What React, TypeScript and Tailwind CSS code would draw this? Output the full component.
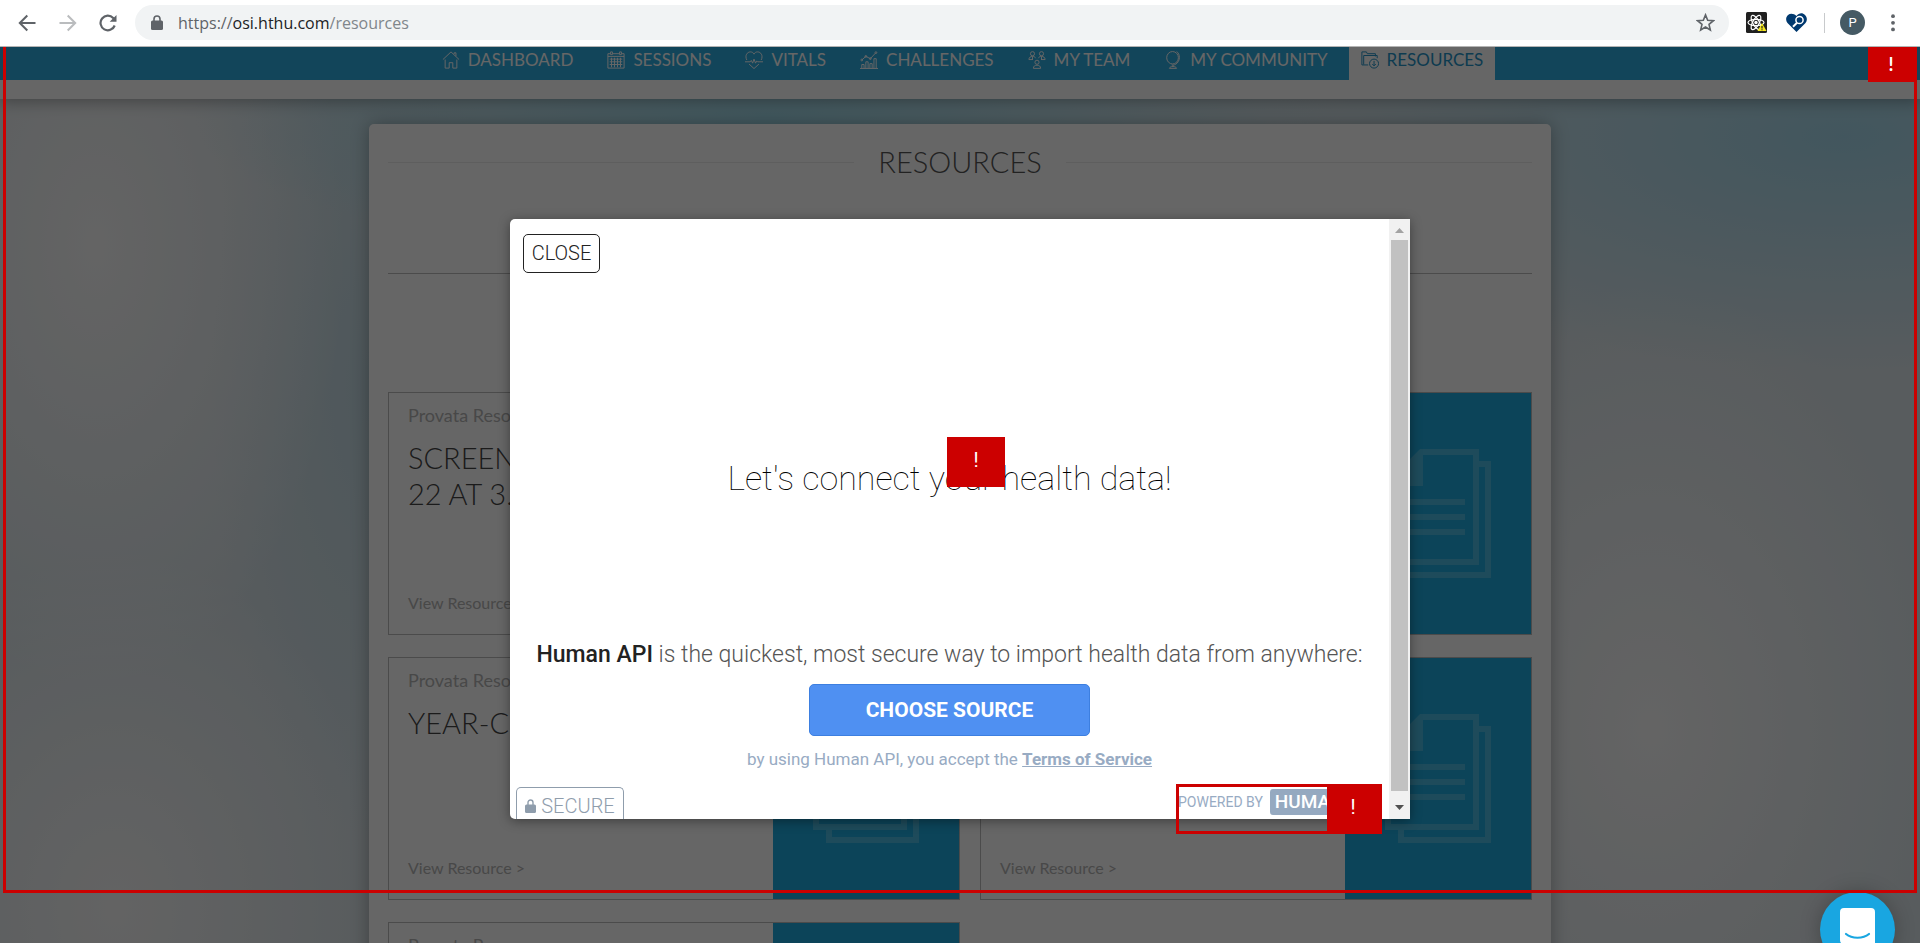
import React from "react";

type IconProps = { className?: string };

const stroke = {
  viewBox: "0 0 20 20",
  fill: "none",
  stroke: "currentColor",
  strokeWidth: 1.1,
  "aria-hidden": true,
} as const;

const HomeIcon = ({ className }: IconProps) => (
  <svg {...stroke} className={className}>
    <path d="M1 9.500 10 1l9 8.500M3.500 9.500V19H8v-6h4v6h4.500V9.500M13.500 3.500V2h2v3.800" />
  </svg>
);
const CalendarIcon = ({ className }: IconProps) => (
  <svg {...stroke} className={className}>
    <path d="M1 3h3m2 0h8m2 0h3v16H1V3M1 6h18M4 1h2v3H4zM14 1h2v3h-2zM3 9h14M3 12h14M3 15h14M5 7.500V18M8.300 7.500V18M11.700 7.500V18M15 7.500V18" />
  </svg>
);
const VitalsIcon = ({ className }: IconProps) => (
  <svg {...stroke} className={className}>
    <path d="M2 10C-.5 5 2.500 1 6 1c1.800 0 3.200.8 4 2.500C10.800 1.800 12.200 1 14 1c3.500 0 6.500 4 4 9M0 12h6l1-1.500 1.500 3L10 9l1.700 4.500 1.300-2.500 1 1h6M4.500 14.500 10 19.500l5.500-5" />
  </svg>
);
const ChartIcon = ({ className }: IconProps) => (
  <svg {...stroke} className={className}>
    <path d="M0 19.400h20M2 19v-4h2.500v4M6.500 19v-7H9v7M11 19v-5h2.500v5M15.500 19V8.500H18V19M2 10l4.500-4 5 2.500L17.500 2" />
    <circle cx="2" cy="10" r="1" />
    <circle cx="6.500" cy="6" r="1" />
    <circle cx="11.500" cy="8.500" r="1" />
    <circle cx="17.700" cy="1.800" r="1" />
  </svg>
);
const TeamIcon = ({ className }: IconProps) => (
  <svg {...stroke} className={className}>
    <circle cx="5" cy="3" r="2.300" />
    <circle cx="15" cy="3" r="2.300" />
    <circle cx="10" cy="12.500" r="2.300" />
    <path d="M1 9.500C1 7 3 6 5 6s3 .8 3.500 2M19 9.500C19 7 17 6 15 6s-3 .8-3.500 2M1 9.500h4M19 9.500h-4M6 19.300c0-2.600 1.800-3.500 4-3.500s4 .9 4 3.500zM5 6v4M15 6v4" />
  </svg>
);
const GlobeIcon = ({ className }: IconProps) => (
  <svg {...stroke} className={className}>
    <ellipse cx="9.500" cy="7.500" rx="6.500" ry="6.900" />
    <path d="M14 .7c4 2 4.800 11-1.500 14.300-1.200.7-3 .7-4 .4M10 15.500v2M6 19.300c.5-1.600 2-2 4-2s3.500.4 4 2z" />
  </svg>
);
const FolderIcon = ({ className }: IconProps) => (
  <svg {...stroke} className={className}>
    <path d="M8 15.500H1V1h5l1 2h9v3M3 15V5h15v3" />
    <circle cx="14.500" cy="14" r="5" />
    <path d="M14.500 11v5.500m-2-2 2 2 2-2" />
  </svg>
);

const navItems = [
  { label: "DASHBOARD", Icon: HomeIcon },
  { label: "SESSIONS", Icon: CalendarIcon },
  { label: "VITALS", Icon: VitalsIcon },
  { label: "CHALLENGES", Icon: ChartIcon },
  { label: "MY TEAM", Icon: TeamIcon },
  { label: "MY COMMUNITY", Icon: GlobeIcon },
];

function BrowserBar() {
  return (
    <header className="flex h-[47px] shrink-0 items-center border-b border-[#b4b4b4] bg-white pb-px pl-[18px] pr-[18px] font-['Open_Sans',sans-serif] text-[#5f6368]">
      <button aria-label="Back">
        <svg className="size-[18px]" viewBox="0 0 18 18" fill="none" stroke="currentColor" strokeWidth="2" aria-hidden>
          <path d="M17.500 9H2M9.300 1.500 1.800 9l7.500 7.500" />
        </svg>
      </button>
      <button aria-label="Forward" className="ml-[23px] text-[#babcbe]">
        <svg className="size-[18px]" viewBox="0 0 18 18" fill="none" stroke="currentColor" strokeWidth="2" aria-hidden>
          <path d="M.5 9H16M8.700 1.500 16.200 9l-7.500 7.500" />
        </svg>
      </button>
      <button aria-label="Reload" className="ml-[22px]">
        <svg className="size-[18px]" viewBox="0 0 18 18" fill="none" stroke="currentColor" strokeWidth="2.200" aria-hidden>
          <path d="M15.700 11.500A7.300 7.300 0 1 1 14.200 4L16 6" />
          <path d="M17.500 1v6.800h-6.800z" fill="currentColor" stroke="none" />
        </svg>
      </button>
      <div className="ml-[18px] flex h-[35px] flex-1 items-center rounded-full bg-[#f1f3f4] pl-4 pr-[14px]">
        <svg className="h-[15px] w-[12px]" viewBox="0 0 12 15" aria-hidden>
          <path d="M3 6V4a3 3 0 0 1 6 0v2" fill="none" stroke="currentColor" strokeWidth="1.600" />
          <rect y="5.500" width="12" height="9.500" rx="1.500" fill="currentColor" />
        </svg>
        <p className="ml-[15px] flex-1 text-[16px] text-[#80868b]">
          <span className="text-[#5f6368]">https://</span>
          <span className="text-[#202124]">osi.hthu.com</span>/resources
        </p>
        <button aria-label="Bookmark this page">
          <svg className="size-[19px]" viewBox="0 0 20 20" fill="none" stroke="currentColor" strokeWidth="1.700" aria-hidden>
            <path d="m10 2 2.300 5.600 6 .5-4.600 3.900 1.400 5.900L10 14.800l-5.100 3.100L6.300 12 1.700 8.100l6-.5z" />
          </svg>
        </button>
      </div>
      <button aria-label="React developer tools" className="ml-[17px]">
        <svg className="size-[21px]" viewBox="0 0 21 21" aria-hidden>
          <rect width="21" height="21" rx="1.500" fill="#202020" />
          <g fill="none" stroke="#fff" strokeWidth="1.200">
            <ellipse cx="10" cy="10.500" rx="8" ry="3.200" />
            <ellipse cx="10" cy="10.500" rx="8" ry="3.200" transform="rotate(60 10 10.500)" />
            <ellipse cx="10" cy="10.500" rx="8" ry="3.200" transform="rotate(120 10 10.500)" />
          </g>
          <circle cx="10" cy="10.500" r="1.700" fill="#fff" />
          <path d="m16 11 4.500 8h-9z" fill="#f4e61e" />
          <path d="M16 14v2.500m0 .8v1" stroke="#202020" strokeWidth="1.200" />
        </svg>
      </button>
      <button aria-label="Health extension" className="ml-[19px]">
        <svg className="h-[19px] w-[21px]" viewBox="0 0 21 19" aria-hidden>
          <path d="M10.500 19 1.500 10C-.5 7.500-.3 4 2 2c2.500-2.200 6-1.500 8.500 1C13-.3 16.500-.7 19 2c2.300 2.300 2.500 5.500.5 8z" fill="#00396f" />
          <circle cx="13.500" cy="7" r="3.600" fill="none" stroke="#fff" strokeWidth="1.500" />
          <path d="m11 9.700-4 4" stroke="#fff" strokeWidth="2" />
        </svg>
      </button>
      <span className="ml-[17px] h-5 w-px bg-[#c8cacc]" />
      <button aria-label="Profile" className="ml-[15px] size-[25px] rounded-full bg-[#455a64] font-[Roboto,sans-serif] text-[13px] text-white">
        P
      </button>
      <button aria-label="Browser menu" className="ml-[19px]">
        <svg className="h-[18px] w-[18px]" viewBox="0 0 18 18" fill="currentColor" aria-hidden>
          <circle cx="9" cy="2.200" r="1.900" />
          <circle cx="9" cy="8.800" r="1.900" />
          <circle cx="9" cy="15.400" r="1.900" />
        </svg>
      </button>
    </header>
  );
}

function SiteNav() {
  return (
    <nav className="relative shrink-0 bg-white pb-[19px] shadow-[0_3px_14px_rgba(0,0,0,0.3)]">
      <div className="flex h-[33px] items-start justify-center bg-[#2dace1] text-[17px] leading-[25px] text-white">
        {navItems.map(({ label, Icon }) => (
          <a key={label} href="#" className="flex items-center gap-2 px-[17px]">
            <Icon className="size-[18px]" />
            {label}
          </a>
        ))}
        <a href="#" aria-current="page" className="ml-1 flex h-[33px] items-start gap-2 bg-white px-[12px] text-[#2594c8]">
          <FolderIcon className="mt-1 size-[18px]" />
          RESOURCES
        </a>
      </div>
    </nav>
  );
}

const DocumentsIcon = () => (
  <svg className="h-[129px] w-[106px] text-white/20" viewBox="0 0 106 129" fill="currentColor" aria-hidden>
    <path d="M35 0h59v116H0V35zM38 6v31H6v73h82V6z" fillRule="evenodd" />
    <path d="M94 12h12v117H13v-13h6v7h81V18h-6z" />
    <path d="M20 50h60v6H20zM20 65h60v6H20zM20 80h60v6H20z" />
  </svg>
);

function ResourceCard({ lines }: { lines: string[] }) {
  return (
    <article className="flex h-[243px] border border-[#bbb]">
      <div className="flex min-w-0 flex-1 flex-col px-[19px] pb-[19px] pt-[10px] text-[#b4b4b4]">
        <p className="text-[18px] leading-6">Provata Resource</p>
        <h2 className="mt-[13px] text-[29px] font-light leading-[36px] text-[#444]">
          {lines.map((line) => (
            <span key={line} className="block">
              {line}
            </span>
          ))}
        </h2>
        <a href="#" className="mt-auto text-[16px] leading-6">
          View Resource &gt;
        </a>
      </div>
      <div className="flex w-[186px] shrink-0 items-center justify-center bg-[#1eaade]">
        <DocumentsIcon />
      </div>
    </article>
  );
}

function ResourcesPanel() {
  return (
    <section className="mx-auto mt-[25px] w-full max-w-[1182px] rounded-t-[5px] bg-white px-[19px] pb-10 pt-[18px] shadow-[0_0_18px_rgba(0,0,0,0.3)]">
      <div className="flex items-center gap-[24px]">
        <span className="h-px flex-1 bg-[#ececec]" />
        <h1 className="text-[29px] font-light leading-10 text-[#555]">RESOURCES</h1>
        <span className="h-px flex-1 bg-[#ececec]" />
      </div>
      <hr className="mt-[91px] border-[#bbb]" />
      <div className="mt-[118px] grid grid-cols-[572fr_552fr] gap-x-5 gap-y-[22px]">
        <ResourceCard lines={["SCREEN", "22 AT 3."]} />
        <ResourceCard lines={[]} />
        <ResourceCard lines={["YEAR-C"]} />
        <ResourceCard lines={[]} />
        <ResourceCard lines={[]} />
      </div>
    </section>
  );
}

function ScrollTrack() {
  return (
    <div className="flex w-[21px] shrink-0 flex-col items-center bg-[#f1f1f1]" aria-hidden>
      <svg className="size-[21px]" viewBox="0 0 21 21" fill="#a3a3a3">
        <path d="M6 14h9l-4.500-5z" />
      </svg>
      <div className="w-[17px] flex-1 bg-[#c1c1c1]" />
      <svg className="h-[28px] w-[21px]" viewBox="0 0 21 28" fill="#505050">
        <path d="M6 14h9l-4.500 5z" />
      </svg>
    </div>
  );
}

function ConnectDialog() {
  return (
    <div role="dialog" aria-label="Connect health data" className="relative h-[600px] w-[900px] font-[Roboto,sans-serif]">
      <div className="flex h-full overflow-hidden rounded-l-[5px] bg-white shadow-[0_2px_12px_rgba(0,0,0,0.4)]">
        <div className="flex min-w-0 flex-1 flex-col items-center overflow-hidden pt-[15px] text-[#222]">
          <button className="ml-[13px] h-[39px] w-[77px] shrink-0 self-start rounded-[5px] border border-[#222] pb-px text-[20px] font-light">
            CLOSE
          </button>
          <h2 className="mt-[185px] text-[34px] font-thin leading-10 text-black">Let's connect your health data!</h2>
          <p className="mt-[141px] whitespace-nowrap text-[23px] font-light leading-8 text-[#555]">
            <strong className="font-medium text-[#222]">Human API</strong> is the quickest, most secure way to import
            health data from anywhere:
          </p>
          <button className="mt-[13px] h-[52px] w-[281px] shrink-0 rounded-[5px] border border-[#3d7fe0] bg-[#4f90f2] pt-px text-[21px] font-bold text-white">
            CHOOSE SOURCE
          </button>
          <p className="mt-[11px] text-[17px] leading-6 text-[#98abc3]">
            by using Human API, you accept the{" "}
            <a href="#" className="font-bold underline">
              Terms of Service
            </a>
          </p>
          <div className="mt-4 flex w-full shrink-0 items-start justify-between pl-[6px] text-[#8f9dac]">
            <span className="flex h-[37px] w-[108px] items-center justify-center gap-[5px] rounded-t-[5px] border border-b-0 border-[#8f9dac] text-[20px] font-light">
              <svg className="h-[14px] w-[11px]" viewBox="0 0 11 14" aria-hidden>
                <path d="M3 6V3.500a2.500 2.500 0 0 1 5 0V6" fill="none" stroke="currentColor" strokeWidth="1.400" />
                <rect y="5.500" width="11" height="8.500" rx="1.500" fill="currentColor" />
              </svg>
              SECURE
            </span>
            <span className="mt-[2px] flex w-[211px] items-center gap-[7px] text-[14px] text-[#98abc3]">
              POWERED BY
              <b className="rounded-[3px] bg-[#95a9c0] px-[5px] text-[19px] font-medium leading-[26px] text-white">HUMAN</b>
            </span>
          </div>
        </div>
        <ScrollTrack />
      </div>
      <div className="absolute left-[437px] top-[218px] flex h-[50px] w-[58px] items-center justify-center bg-[#c00] pb-1 text-[20px] text-white">
        !
      </div>
      <div className="absolute left-[666px] top-[565px] flex h-[50px] w-[206px] justify-end border-[3px] border-[#c00]">
        <span className="flex w-[52px] items-center justify-center bg-[#c00] pb-1 text-[20px] text-white">!</span>
      </div>
    </div>
  );
}

export default function App() {
  return (
    <div className="flex h-screen flex-col overflow-hidden font-[Lato,sans-serif]">
      <BrowserBar />
      <main className="relative flex min-h-0 flex-1 flex-col overflow-hidden bg-[#dbe5ea] bg-[radial-gradient(ellipse_30%_16%_at_40%_8%,#a3dcec_0%,#a3dcec00_100%),radial-gradient(ellipse_30%_26%_at_96%_10%,#a6d8ea_0%,#a6d8ea00_100%),radial-gradient(ellipse_13%_50%_at_5%_22%,#fafafa_0%,#fafafa00_100%),radial-gradient(ellipse_16%_50%_at_86%_76%,#fafafa_0%,#fafafa00_100%),radial-gradient(ellipse_14%_40%_at_6%_96%,#f8f8f8_0%,#f8f8f800_100%),radial-gradient(ellipse_8%_50%_at_19%_38%,#c4dbe4_0%,#c4dbe400_100%)]">
        <SiteNav />
        <ResourcesPanel />
        <div className="absolute inset-0 flex items-start justify-center bg-black/60 pt-[172px]">
          <ConnectDialog />
        </div>
        <button
          aria-label="Open chat"
          className="absolute -bottom-[24px] right-[25px] flex size-[75px] items-start justify-center rounded-full bg-[#19a6e1] pt-[16px] shadow-[0_0_20px_rgba(0,0,0,0.25)]"
        >
          <svg className="h-[40px] w-[35px]" viewBox="0 0 35 40" aria-hidden>
            <path d="M4 0h27a4 4 0 0 1 4 4v36l-6-4H4a4 4 0 0 1-4-4V4a4 4 0 0 1 4-4z" fill="#fff" />
            <path d="M6 26c6 5 17 5 23 0" fill="none" stroke="#19a6e1" strokeWidth="2.200" strokeLinecap="round" />
          </svg>
        </button>
        <div className="pointer-events-none absolute inset-x-[3px] bottom-[50px] top-0 flex items-start justify-end border-x-[3px] border-b-[3px] border-[#c00]">
          <span className="-mr-[3px] flex h-[35px] w-[49px] items-center justify-center bg-[#c00] pr-[3px] text-[18px] font-bold text-white">
            !
          </span>
        </div>
      </main>
    </div>
  );
}
